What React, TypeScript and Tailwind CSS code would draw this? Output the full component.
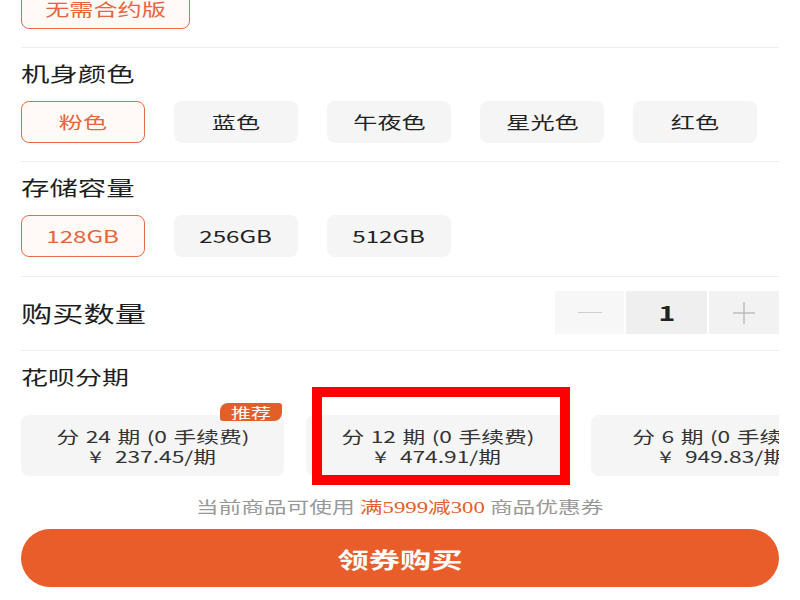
import React from "react";

function S({ children, className = "" }: { children: React.ReactNode; className?: string }) {
  return <span className={"inline-block scale-x-[1.42] whitespace-pre " + className}>{children}</span>;
}

const colors = ["粉色", "蓝色", "午夜色", "星光色", "红色"];
const storages = ["128GB", "256GB", "512GB"];
const plans = [
  { a: "分 24 期 (0 手续费)", b: "¥ 237.45/期", tag: true },
  { a: "分 12 期 (0 手续费)", b: "¥ 474.91/期", tag: false },
  { a: "分 6 期 (0 手续费)", b: "¥ 949.83/期", tag: false },
];

function Opt({ label, active }: { label: string; active?: boolean }) {
  return (
    <div
      className={
        "w-[124px] h-[42px] shrink-0 rounded-[8px] flex items-center justify-center text-[17px] " +
        (active
          ? "border-[1.5px] border-[#e96b45] bg-[#fffaf8] text-[#e8643a]"
          : "bg-[#f5f5f5] text-[#222]")
      }
    >
      <S>{label}</S>
    </div>
  );
}

function Title({ children, size = "text-[20px]" }: { children: React.ReactNode; size?: string }) {
  return (
    <div className={"mt-[12px] h-[28px] flex items-center text-[#1f1f1f] " + size}>
      <S className="origin-left">{children}</S>
    </div>
  );
}

export default function App() {
  return (
    <div className="relative w-[800px] h-[600px] overflow-hidden bg-white px-[21px] font-['Noto_Sans_CJK_SC',sans-serif] text-[#222]">
      <div className="-mt-[11px] w-[169px] h-[40px] rounded-[8px] border-[1.5px] border-[#e96b45] bg-[#fffaf8] text-[#e8643a] text-[17px] flex items-center justify-center">
        <S>无需合约版</S>
      </div>
      <div className="mt-[18px] h-px bg-[#eeeeee]" />

      <Title>机身颜色</Title>
      <div className="mt-[13px] flex gap-[29px]">
        {colors.map((c, i) => (
          <Opt key={c} label={c} active={i === 0} />
        ))}
      </div>
      <div className="mt-[18px] h-px bg-[#eeeeee]" />

      <Title>存储容量</Title>
      <div className="mt-[13px] flex gap-[29px]">
        {storages.map((c, i) => (
          <Opt key={c} label={c} active={i === 0} />
        ))}
      </div>
      <div className="mt-[19px] h-px bg-[#eeeeee]" />

      <div className="mt-[14px] h-[43px] flex items-center justify-between">
        <div className="text-[22px] text-[#1f1f1f]">
          <S className="origin-left">购买数量</S>
        </div>
        <div className="flex h-[43px] gap-[2px]">
          <div className="w-[69px] bg-[#f7f7f7] flex items-center justify-center">
            <div className="w-[24px] h-[1.5px] bg-[#cfcfcf]" />
          </div>
          <div className="w-[81px] bg-[#efefef] flex items-center justify-center text-[20px] font-bold text-[#222]">
            <S>1</S>
          </div>
          <div className="w-[70px] bg-[#f2f2f2] flex items-center justify-center">
            <svg width="24" height="24" viewBox="0 0 24 24">
              <path d="M12 1v22M1 12h22" stroke="#bdbdbd" strokeWidth="1.5" />
            </svg>
          </div>
        </div>
      </div>
      <div className="mt-[16px] h-px bg-[#eeeeee]" />

      <Title size="text-[19px]">花呗分期</Title>
      <div className="mt-[12px] pt-[12px] flex gap-[22px] overflow-hidden">
        {plans.map((p) => (
          <div
            key={p.a}
            className="relative w-[263px] h-[61px] shrink-0 rounded-[8px] bg-[#f5f5f5] flex flex-col items-center justify-center text-[16px] leading-[20px] text-[#333] [word-spacing:1px]"
          >
            <S>{p.a}</S>
            <S>{p.b.replace("¥ ", "¥  ")}</S>
            {p.tag && (
              <div className="absolute -top-[12px] right-[2px] w-[62px] h-[18px] rounded-tl-[8px] rounded-br-[8px] rounded-tr-[3px] rounded-bl-[3px] bg-[#e35f2a] text-white text-[14px] leading-[18px] flex items-center justify-center [word-spacing:0px]">
                <S>推荐</S>
              </div>
            )}
          </div>
        ))}
      </div>

      <div className="mt-[20px] h-[22px] flex items-center justify-center text-[16px] text-[#999999]">
        <S>
          当前商品可使用 <span className="text-[#e4602c] font-['Liberation_Serif','Noto_Sans_CJK_SC',serif]">满5999减300</span> 商品优惠券
        </S>
      </div>

      <div className="mt-[11px] h-[58px] rounded-full bg-[#e85d29] flex items-center justify-center text-white text-[22px] font-bold">
        <S>领券购买</S>
      </div>

      <div className="absolute left-[312px] top-[387px] w-[258px] h-[98px] border-[10px] border-[#ff0000]" />
    </div>
  );
}
